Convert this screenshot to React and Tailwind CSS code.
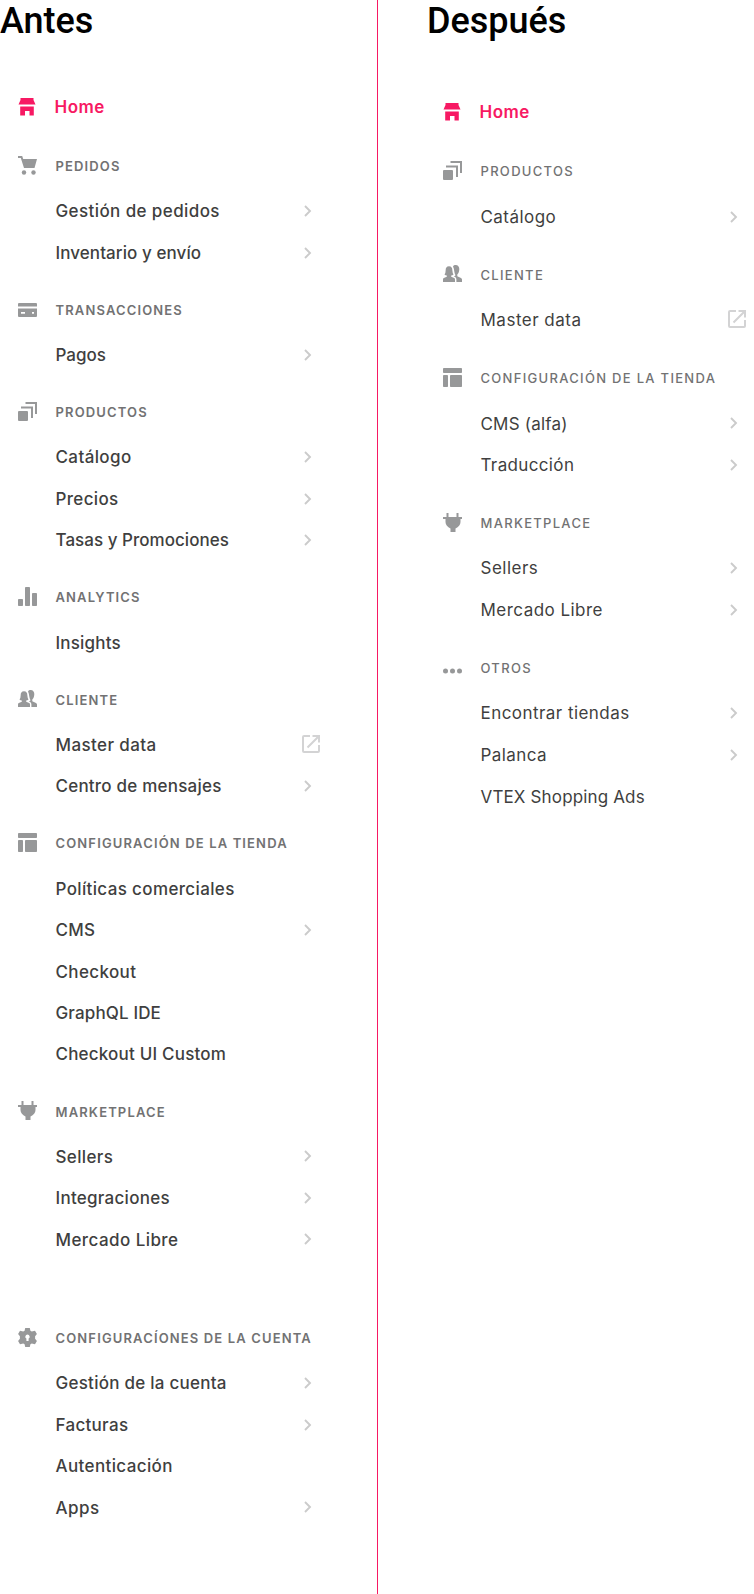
const P = {
  home: <><path d="M2.500 0h13v2L17.500 6.600H.5L2.500 2z" /><path d="M2.200 8.600h13.600V17.500H11.500V13H7v4.500H2.200z" /></>,
  cart: <><path d="M0 0h4.200l1 3H19l-2.500 9H6L2.800 2H0z" /><circle cx="6" cy="16.500" r="2.200" /><circle cx="15.500" cy="16.500" r="2.200" /></>,
  card: <><path d="M1 3h17q1 0 1 1v2.500H0V4q0-1 1-1z" /><path fillRule="evenodd" d="M0 8.500h19V16q0 1-1 1H1q-1 0-1-1zM3 12v1.800h4V12zm11 0v1.800h2V12z" /></>,
  products: <><rect y="9" width="10" height="10" rx="1" /><path d="M3 4.600h12V16h-2V6.600H3zM7.500 0H19v12h-2V2H7.500z" /></>,
  bars: <><rect y="12" width="5" height="7" rx=".8" /><rect x="7" width="5" height="19" rx=".8" /><rect x="14" y="6" width="5" height="13" rx=".8" /></>,
  people: <><path d="M6 2.200C8.500 2.200 9.300 4 9.300 6q.2 3 1.200 4.500-1 1-2.300 1v1.300l3 1.300q.8.400.8 1.400V18H0v-2.500q0-1 .8-1.400l3-1.300v-1.300q-1.400 0-2.300-1Q2.700 9 2.700 6c0-2 .8-3.800 3.300-3.800z" /><path d="M10 2.500C10.500 1.400 11.500 1 12.700 1 15 1 16.300 2.700 16.300 5c0 2-.7 4.500-2 5.600v1.600l3.700 1.700q1 .5 1 1.600V18h-5.600v-2.500q0-1.700-1.300-2.400l-1.300-.6q1.200-.5 1.700-1.200C11 9 11.400 5 10 2.500z" /></>,
  layout: <><rect width="19" height="5" rx=".8" /><rect y="7" width="5" height="12" rx=".8" /><rect x="7" y="7" width="12" height="12" rx=".8" /></>,
  plug: <path d="M3.500 0h2v4h8V0h2v4H19v2h-1.500v3c0 3-2 5-5 6.500V19h-5v-3.500c-3-1.500-5-3.500-5-6.500V6H0V4h3.500z" />,
  gear: <path fillRule="evenodd" d="M7.200 0h4.600l.6 2.700 1.400.8 3.200-.8 1.900 3.300-1.800 2.200v2.600l1.800 2.200-1.900 3.300-3.200-.8-1.400.8-.6 2.700H7.200l-.6-2.700-1.400-.8-3.200.8L.1 13l1.800-2.200V8.200L.1 6 2 2.700l3.200.8 1.400-.8zM9.500 6.500a2.200 2.200 0 0 0-1.100 4.100V13h2.200v-2.400a2.200 2.200 0 0 0-1.100-4.100z" />,
  dots: <><circle cx="2.500" cy="13" r="2.500" /><circle cx="9.500" cy="13" r="2.500" /><circle cx="16.500" cy="13" r="2.500" /></>,
};

function Icon({ name, className }) {
  return (
    <svg viewBox="0 0 19 19" width="19" height="19" className={className} fill="currentColor" aria-hidden="true">
      {P[name]}
    </svg>
  );
}

function Chevron() {
  return (
    <svg viewBox="0 0 8 12" width="8" height="12" fill="none" stroke="#cbcbcb" strokeWidth="1.900" className="mr-[8px]">
      <path d="M1 1l5 5-5 5" />
    </svg>
  );
}

function External() {
  return (
    <svg viewBox="0 0 18 18" width="18" height="18" fill="none" stroke="#d3d3d4" strokeWidth="2" className="-mt-[2px]">
      <path d="M8 1H2q-1 0-1 1v14q0 1 1 1h14q1 0 1-1V10M10.500 1H17v6.500M17 1L5.500 12.500" />
    </svg>
  );
}

const before = [
  ["cart", "PEDIDOS", [["Gestión de pedidos", "tracking-[0.4px]", "c"], ["Inventario y envío", "tracking-[0.08px]", "c"]]],
  ["card", "TRANSACCIONES", [["Pagos", "tracking-[0px]", "c"]]],
  ["products", "PRODUCTOS", [["Catálogo", "tracking-[0.38px]", "c"], ["Precios", "tracking-[0.35px]", "c"], ["Tasas y Promociones", "tracking-[0.03px]", "c"]]],
  ["bars", "ANALYTICS", [["Insights", "tracking-[0.2px]"]]],
  ["people", "CLIENTE", [["Master data", "tracking-[0.4px]", "e"], ["Centro de mensajes", "tracking-[0.22px]", "c"]]],
  ["layout", "CONFIGURACIÓN DE LA TIENDA", [["Políticas comerciales", "tracking-[0.36px]"], ["CMS", "tracking-[0.3px]", "c"], ["Checkout", "tracking-[0.37px]"], ["GraphQL IDE", "tracking-[0.14px]"], ["Checkout UI Custom", "tracking-[0.2px]"]]],
  ["plug", "MARKETPLACE", [["Sellers", "tracking-[0.35px]", "c"], ["Integraciones", "tracking-[0.27px]", "c"], ["Mercado Libre", "tracking-[0.43px]", "c"]]],
  ["gear", "CONFIGURACÍONES DE LA CUENTA", [["Gestión de la cuenta", "tracking-[0.25px]", "c"], ["Facturas", "tracking-[0.3px]", "c"], ["Autenticación", "tracking-[0.38px]"], ["Apps", "tracking-[0.5px]", "c"]]],
];
const after = [
  ["products", "PRODUCTOS", [["Catálogo", "tracking-[0.45px]", "c"]]],
  ["people", "CLIENTE", [["Master data", "tracking-[0.5px]", "e"]]],
  ["layout", "CONFIGURACIÓN DE LA TIENDA", [["CMS (alfa)", "tracking-[0.2px]", "c"], ["Traducción", "tracking-[0.36px]", "c"]]],
  ["plug", "MARKETPLACE", [["Sellers", "tracking-[0.5px]", "c"], ["Mercado Libre", "tracking-[0.47px]", "c"]]],
  ["dots", "OTROS", [["Encontrar tiendas", "tracking-[0.45px]", "c"], ["Palanca", "tracking-[0.43px]", "c"], ["VTEX Shopping Ads", "tracking-[0.15px]"]]],
];

function Home() {
  return (
    <div className="flex h-[40px] items-center text-[#f71963]">
      <Icon name="home" className="mr-[17.500px]" />
      <span className="pt-[2px] text-[17px] font-semibold tracking-[0.500px]">Home</span>
    </div>
  );
}

function Section({ data, head, title: titleClass, row, weight, gap }) {
  const [icon, title, items] = data;
  return (
    <section className={gap}>
      <div className={`flex items-center whitespace-nowrap ${head}`}>
        <Icon name={icon} className="-mt-[2px] mr-[18.500px] shrink-0 text-[#979899]" />
        <h2 className={`pt-px text-[13px] text-[#727273] ${titleClass}`}>{title}</h2>
      </div>
      <ul>
        {items.map(([label, tracking, kind]) => (
          <li key={label} className={`flex items-center justify-between pl-[37.500px] ${row}`}>
            <span className={`whitespace-nowrap pt-[2px] text-[17px] text-[#3f3f40] ${weight} ${tracking}`}>{label}</span>
            {kind === "c" && <Chevron />}
            {kind === "e" && <External />}
          </li>
        ))}
      </ul>
    </section>
  );
}

export default function App() {
  return (
    <main className="flex h-[1594px] w-[754px] overflow-hidden bg-white font-['Inter',sans-serif]">
      <div className="w-[378px] border-r border-[#f71963]">
        <h1 className="h-[87px] font-['Roboto',sans-serif] text-[36px] font-medium leading-[42px] text-black">Antes</h1>
        <nav className="ml-[18px] w-[302px]">
          <Home />
          <div className="h-[15.600px]" />
          {before.map((s, i) => (
            <Section key={s[1]} data={s} head="h-[47.800px]" title="font-semibold tracking-[1.140px]" row="h-[41.470px]" weight="font-medium" gap={i === 7 ? "mt-[54.400px]" : "mb-[13px]"} />
          ))}
        </nav>
      </div>
      <div className="flex-1">
        <h1 className="ml-[49px] h-[92px] font-['Roboto',sans-serif] text-[36px] font-medium leading-[42px] text-black">Después</h1>
        <nav className="ml-[65px] w-[303px]">
          <Home />
          <div className="h-[15.400px]" />
          {after.map((s) => (
            <Section key={s[1]} data={s} head="h-[48.600px]" title="font-medium tracking-[1.300px]" row="h-[41.600px]" weight="font-normal" gap="mb-[13.100px]" />
          ))}
        </nav>
      </div>
    </main>
  );
}
